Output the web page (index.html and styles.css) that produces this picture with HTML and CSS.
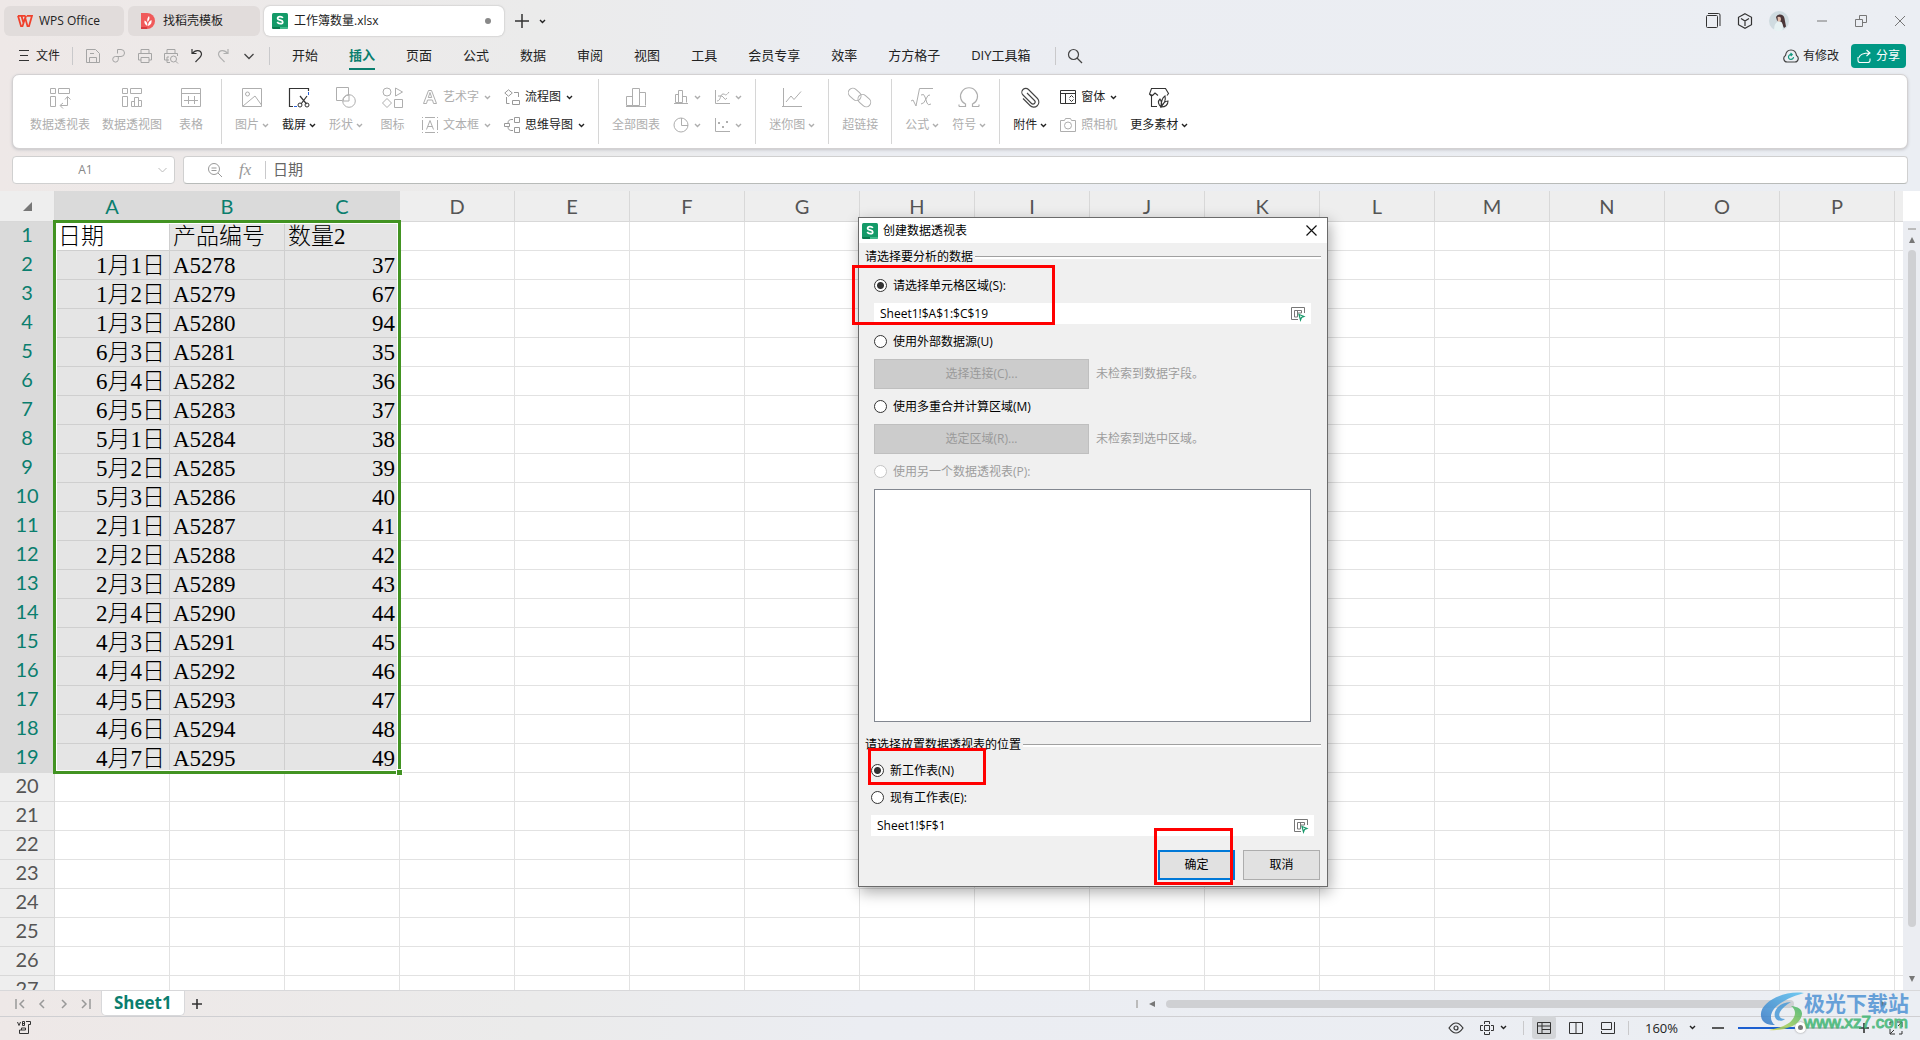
FILE: index.html
```html
<!DOCTYPE html>
<html lang="zh-CN">
<head>
<meta charset="utf-8">
<title>工作簿数量.xlsx - WPS Office</title>
<link rel="stylesheet" href="styles.css">
</head>
<body>
<svg class="defs" aria-hidden="true">
  <symbol id="chev" viewBox="0 0 7 5"><path d="M1 1l2.500 2.500L6 1" fill="none" stroke="currentColor" stroke-width="1.400"/></symbol>
  <symbol id="sheet-logo" viewBox="0 0 16 16"><rect width="16" height="16" rx="1.500" fill="#149a68"/><path d="M0 14h8v2H1.500Q0 16 0 14z" fill="#0a7a4e"/><path d="M8 14h8q0 2-1.500 2H8z" fill="#3fb98a"/><path d="M10.800 5C10 3 5.600 3 5.600 5.300c0 2.400 5.200 1.400 5.200 3.600 0 2.300-4.600 2.300-5.500 0" fill="none" stroke="#fff" stroke-width="1.700"/></symbol>
  <symbol id="pick" viewBox="0 0 16 16"><path d="M8 13.500H1.500v-12h13V7M4.500 4.500h7v2.500h-4v4h-3zM7.500 4.500V7" fill="none" stroke="#777"/><path d="M9 8.500l5 2-2.500 1-1 2.500z" fill="none" stroke="#1a9a6c" stroke-width="1.200"/></symbol>
</svg>
<div class="app">
  <header class="titlebar">
    <button class="tab tab-home"><svg width="16" height="14" viewBox="0 0 16 14"><path d="M1 1.800h7M1 1.800l3 10.400h1.500l2.700-8.400 2.300 8.400H12l3-10.400h-5M4.500 2l2 7M8 5l1.200-3.200" fill="none" stroke="#f0412c" stroke-width="1.800"/></svg><span>WPS Office</span></button>
    <button class="tab tab-doc"><svg width="14" height="16" viewBox="0 0 14 16"><path d="M0 0h6a8 8 0 010 16H0z" fill="#f05a5a"/><path d="M0 14h6v2H0z" fill="#d83a3f"/><path d="M6.500 13C4 12 3 10 3.500 7.500c2 .5 3 2.500 3 5.500zM6.500 9C5.800 6.500 6.500 4.500 8 3c1 2 .5 4-1.500 6zM7 13c0-3 1-5 3.500-6 .5 3-.5 5-3.500 6z" fill="#fff"/></svg><span>找稻壳模板</span></button>
    <button class="tab tab-active"><svg width="16" height="16"><use href="#sheet-logo"/></svg><span>工作簿数量.xlsx</span><i class="dot"></i></button>
    <button class="plain" aria-label="新建"><svg width="14" height="14" viewBox="0 0 14 14"><path d="M7 0v14M0 7h14" stroke="#333" stroke-width="1.500"/></svg></button>
    <button class="plain" aria-label="标签列表"><svg width="7" height="5"><use href="#chev"/></svg></button>
    <div class="window-tools">
      <button class="plain" aria-label="窗口"><svg width="16" height="16" viewBox="0 0 16 16"><path d="M3 .5h10.500q1.500 0 1.500 1.500V13" fill="none" stroke="#333"/><rect x="1.500" y="2.500" width="11" height="12" rx="1" fill="none" stroke="#333"/></svg></button>
      <button class="plain" aria-label="应用"><svg width="16" height="16" viewBox="0 0 16 16"><path d="M8 .8l6.500 3.500v7.400L8 15.200 1.500 11.700V4.300zM4 5.500l4 2.500 4-2.500M8 8v5" fill="none" stroke="#333" stroke-width="1.200"/></svg></button>
      <button class="plain" aria-label="账号"><svg width="20" height="20" viewBox="0 0 20 20"><circle cx="10" cy="10" r="10" fill="#cfdbe0"/><path d="M7 6c2-4 8-3 8.500 1.500l1.500 8-2 1.500-3-6-4-1.500z" fill="#4a3638"/><path d="M8.500 6q3.500-1 3.500 2t-3 3z" fill="#e2bfae"/><path d="M5 19q0-8 5-8.500t3.500 9q-4.500 1.500-8.500-.5z" fill="#e7f2f3"/></svg></button>
      <button class="plain" aria-label="最小化"><svg width="10" height="10" viewBox="0 0 10 10"><path d="M0 5h10" stroke="#777"/></svg></button>
      <button class="plain" aria-label="还原"><svg width="12" height="12" viewBox="0 0 12 12"><path d="M.5 4.500h7v7h-7zM4.500 4.500v-4h7v7h-4" fill="none" stroke="#777"/></svg></button>
      <button class="plain" aria-label="关闭"><svg width="10" height="10" viewBox="0 0 10 10"><path d="M0 0l10 10M10 0L0 10" stroke="#777"/></svg></button>
    </div>
  </header>

  <nav class="menubar">
    <button class="file"><svg width="10" height="11" viewBox="0 0 10 11"><path d="M0 .5h10M1 5.500h8M0 10.500h10" stroke="#333"/></svg><span>文件</span></button>
    <i class="rule"></i>
    <div class="quick">
      <button class="plain" aria-label="保存"><svg width="16" height="16" viewBox="0 0 16 16"><path d="M1.500 1.500h9l4 4v9h-13zM4.500 14V9.500h7V14M5 5.500h4" fill="none" stroke="#a5a5a5"/></svg></button>
      <button class="plain" aria-label="输出"><svg width="16" height="16" viewBox="0 0 16 16"><path d="M6.500 5.500V1.500H10a3.500 3.500 0 010 7H4.500a2.800 2.800 0 102.800 3V8" fill="none" stroke="#a5a5a5"/></svg></button>
      <button class="plain" aria-label="打印"><svg width="16" height="16" viewBox="0 0 16 16"><path d="M4 5V1.500h8V5M4 12H1.500V5.500h13V12H12M4 9.500h8v5H4z" fill="none" stroke="#a5a5a5"/></svg></button>
      <button class="plain" aria-label="打印预览"><svg width="16" height="16" viewBox="0 0 16 16"><path d="M4 5V1.500h8V5M6 12H1.500V5.500h13V8M6 9H4v5.500h3" fill="none" stroke="#a5a5a5"/><circle cx="10.500" cy="11" r="3" fill="none" stroke="#a5a5a5"/><path d="M12.700 13.200L15 15.500" stroke="#a5a5a5"/></svg></button>
      <button class="plain" aria-label="撤销"><svg width="16" height="16" viewBox="0 0 16 16"><path d="M3 1v4.500h4.500M3.500 5.500C6 1.500 12 1.500 12.500 6 12.500 9 9 11 6.500 14" fill="none" stroke="#333" stroke-width="1.200"/></svg></button>
      <button class="plain" aria-label="恢复"><svg width="16" height="16" viewBox="0 0 16 16"><path d="M13 1v4.500H8.500M12.500 5.500C10 1.500 4 1.500 3.500 6 3.500 9 7 11 9.500 14" fill="none" stroke="#b0b0b0" stroke-width="1.200"/></svg></button>
      <button class="plain" aria-label="更多"><svg width="16" height="16" viewBox="0 0 16 16"><path d="M3.500 6L8 10.500 12.500 6" fill="none" stroke="#444" stroke-width="1.300"/></svg></button>
    </div>
    <i class="rule"></i>
    <div class="menus">
      <button>开始</button><button class="current">插入</button><button>页面</button><button>公式</button><button>数据</button><button>审阅</button><button>视图</button><button>工具</button><button>会员专享</button><button>效率</button><button>方方格子</button><button>DIY工具箱</button>
    </div>
    <i class="rule"></i>
    <button class="plain search" aria-label="搜索"><svg width="16" height="16" viewBox="0 0 16 16"><circle cx="6.500" cy="6.500" r="5" fill="none" stroke="#444" stroke-width="1.200"/><path d="M10 10l5 5" stroke="#444" stroke-width="1.200"/></svg></button>
    <div class="menu-right">
      <button class="modified"><svg width="16" height="14" viewBox="0 0 16 14"><path d="M4 13a3.500 3.500 0 01-1.500-6.500C3 3 5 1 8 1s5 2 5.500 5.500A3.500 3.500 0 0112 13z" fill="none" stroke="#444" stroke-width="1.200"/><path d="M10.500 8A2.500 2.500 0 118.500 5.500M7.500 4l1.700 1.500L7.700 7" fill="none" stroke="#159a80" stroke-width="1.200"/></svg><span>有修改</span></button>
      <button class="share"><svg width="14" height="14" viewBox="0 0 14 14"><path d="M1 8v3.500q0 2 2 2h8q2 0 2-2V9.500M2 8.500C3 5 6 4 12.500 4M9.500 1l3.500 3-3.500 3" fill="none" stroke="#fff" stroke-width="1.100"/></svg><span>分享</span></button>
    </div>
  </nav>

  <section class="ribbon">
    <div class="group group-first">
      <button class="item off"><svg width="24" height="24" viewBox="0 0 24 24"><path d="M2.500 2.500h5v5h-5zM10.500 2.500h11v5h-11zM2.500 10.500h5v10h-5zM19.500 11v8.500h-7M17 13.500l2.500-3 3 3M15 17l-3 2.500 3 3" fill="none" stroke="currentColor"/></svg><span>数据透视表</span></button>
      <button class="item off"><svg width="24" height="24" viewBox="0 0 24 24"><path d="M2.500 2.500h5v5h-5zM10.500 2.500h11v5h-11zM2.500 10.500h5v10h-5zM11.500 15.500h3v5h-3zM14.500 11.500h4v9h-4zM18.500 14.500h3v6h-3z" fill="none" stroke="currentColor"/></svg><span>数据透视图</span></button>
      <button class="item off"><svg width="24" height="24" viewBox="0 0 24 24"><path d="M2.500 2.500h19v18h-19zM2.500 7.500h19M5 14.500h14M9.500 10v8M15.500 10v8" fill="none" stroke="currentColor"/></svg><span>表格</span></button>
    </div>
    <div class="group">
      <button class="item off"><svg width="24" height="24" viewBox="0 0 24 24"><path d="M2.500 2.500h19v18h-19zM3 20l12-10 6.500 9" fill="none" stroke="currentColor"/><circle cx="7.500" cy="8" r="2" fill="none" stroke="currentColor"/></svg><span>图片<svg class="chev"><use href="#chev"/></svg></span></button>
      <button class="item"><svg width="24" height="24" viewBox="0 0 24 24"><path d="M6 20.500H2.500v-18h19V5M13 10l6.500 8M20 10l-6 8" fill="none" stroke="#333" stroke-width="1.200"/><circle cx="13" cy="19" r="2" fill="none" stroke="#333"/><circle cx="20" cy="19" r="2" fill="none" stroke="#333"/><path d="M21.500 6v3M7 20.500h3" stroke="#2a62d8"/></svg><span>截屏<svg class="chev"><use href="#chev"/></svg></span></button>
      <button class="item off"><svg width="24" height="24" viewBox="0 0 24 24"><path d="M8 14.500H2.500v-13h12V9" fill="none" stroke="currentColor"/><circle cx="15" cy="15" r="6.300" fill="none" stroke="currentColor"/><path d="M9 15a6 6 0 016-6v6z" fill="none" stroke="currentColor"/></svg><span>形状<svg class="chev"><use href="#chev"/></svg></span></button>
      <button class="item off"><svg width="24" height="24" viewBox="0 0 24 24"><circle cx="6" cy="6" r="4" fill="none" stroke="currentColor"/><path d="M14.500 2l7 4-7 4zM6 12.500l4.500 4.500L6 21.500 1.500 17zM13.500 13.500h8v8h-8z" fill="none" stroke="currentColor"/></svg><span>图标</span></button>
      <div class="stack">
        <button class="mini off"><svg width="16" height="16" viewBox="0 0 16 16"><path d="M1.500 14.500L6.500 1.500h3l5 13h-3l-1-3.500h-5l-1 3.500zM6.300 8.500h3.400L8 3.500z" fill="none" stroke="currentColor"/></svg><span>艺术字</span><svg class="chev"><use href="#chev"/></svg></button>
        <button class="mini off"><svg width="16" height="16" viewBox="0 0 16 16"><path d="M.5 3v10M15.500 3v10M3 .5h10M3 15.500h10M4.500 12.500L8 3.500l3.500 9M5.700 9.500h4.600" fill="none" stroke="currentColor"/><path d="M0 0h1v1H0zM15 0h1v1h-1zM0 15h1v1H0zM15 15h1v1h-1z" fill="currentColor"/></svg><span>文本框</span><svg class="chev"><use href="#chev"/></svg></button>
      </div>
      <div class="stack">
        <button class="mini"><svg width="16" height="16" viewBox="0 0 16 16"><path d="M4.500.8L8.300 4 4.500 7.200.8 4zM10 3.500h4.500V8M2.500 8v6.500h3M8.500 11.500h7v4h-7z" fill="none" stroke="#999"/></svg><span>流程图</span><svg class="chev"><use href="#chev"/></svg></button>
        <button class="mini"><svg width="16" height="16" viewBox="0 0 16 16"><path d="M10.500.5h5v5h-5zM10.500 10.500h5v5h-5zM.5 6.500h5v3h-5zM9 2.500Q4 2 4 6M9 13.500Q4 14 4 10" fill="none" stroke="#999"/></svg><span>思维导图</span><svg class="chev"><use href="#chev"/></svg></button>
      </div>
    </div>
    <div class="group">
      <button class="item off"><svg width="24" height="24" viewBox="0 0 24 24"><path d="M2.500 10.500h6v9h-6zM8.500 2.500h7v17h-7zM15.500 6.500h6v13M2 20.500h20" fill="none" stroke="currentColor"/></svg><span>全部图表</span></button>
      <div class="stack">
        <button class="mini off" aria-label="柱形图"><svg width="16" height="16" viewBox="0 0 16 16"><path d="M2.500 5.500h3v8h-3zM5.500 1.500h4v12h-4zM9.500 7.500h4v6M1 14.500h14" fill="none" stroke="currentColor"/></svg><svg class="chev"><use href="#chev"/></svg></button>
        <button class="mini off" aria-label="饼图"><svg width="16" height="16" viewBox="0 0 16 16"><circle cx="8" cy="8" r="7" fill="none" stroke="currentColor"/><path d="M8.500 1v7.500H15" fill="none" stroke="currentColor"/></svg><svg class="chev"><use href="#chev"/></svg></button>
      </div>
      <div class="stack">
        <button class="mini off" aria-label="折线图"><svg width="16" height="16" viewBox="0 0 16 16"><path d="M1.500 1v13.500H16M3 12c4 0 3-7 6-7s2 3 6-2M4 7q5-1 6 2t3 0" fill="none" stroke="currentColor"/></svg><svg class="chev"><use href="#chev"/></svg></button>
        <button class="mini off" aria-label="散点图"><svg width="16" height="16" viewBox="0 0 16 16"><path d="M1.500 1v13.500H16" fill="none" stroke="currentColor"/><path d="M4 5h2v2H4zM8 9h2v2H8zM12 4h2v2h-2z" fill="currentColor"/></svg><svg class="chev"><use href="#chev"/></svg></button>
      </div>
    </div>
    <div class="group">
      <button class="item off"><svg width="24" height="24" viewBox="0 0 24 24"><path d="M3.500 2v18.500M2 20.500h20M6 16l5-6 3 3.500 7-8" fill="none" stroke="currentColor"/></svg><span>迷你图<svg class="chev"><use href="#chev"/></svg></span></button>
    </div>
    <div class="group">
      <button class="item off"><svg width="24" height="24" viewBox="0 0 24 24"><g fill="none" stroke="currentColor"><rect x="0" y="4" width="14" height="9" rx="4.500" transform="rotate(42 7 8)"/><rect x="9" y="10" width="14" height="9" rx="4.500" transform="rotate(42 16 15)"/></g></svg><span>超链接</span></button>
    </div>
    <div class="group">
      <button class="item off"><svg width="24" height="24" viewBox="0 0 24 24"><path d="M1 15l2-1 3 6L9.500 2.500H23M11 9q3-2 4 2l2 6q1 3 4 1M20 9q-2-1-4 4t-5 5" fill="none" stroke="currentColor"/></svg><span>公式<svg class="chev"><use href="#chev"/></svg></span></button>
      <button class="item off"><svg width="24" height="24" viewBox="0 0 24 24"><path d="M2 20.500h6.500V18A8.500 8.500 0 1115.500 18v2.500H22M2 18.500v2M22 18.500v2" fill="none" stroke="currentColor" stroke-width="1.200"/></svg><span>符号<svg class="chev"><use href="#chev"/></svg></span></button>
    </div>
    <div class="group">
      <button class="item"><svg width="24" height="24" viewBox="0 0 24 24"><path d="M9 7l7.500 7.500a2 2 0 01-3 3L5 9a3.800 3.800 0 015.500-5.500l9 9a5 5 0 01-7.500 7L5 12.500" fill="none" stroke="#444" stroke-width="1.100"/></svg><span>附件<svg class="chev"><use href="#chev"/></svg></span></button>
      <div class="stack">
        <button class="mini"><svg width="16" height="16" viewBox="0 0 16 16"><path d="M.5 1.500h15v13H.5zM.5 4.500h15M5.500 4.500v10M9.500 8.500l2-2 2 2M9.500 10.500l2 2 2-2" fill="none" stroke="#333"/></svg><span>窗体</span><svg class="chev"><use href="#chev"/></svg></button>
        <button class="mini off"><svg width="16" height="16" viewBox="0 0 16 16"><path d="M.5 3.500h4l1-2h5l1 2h4v11H.5z" fill="none" stroke="currentColor"/><circle cx="8" cy="8.500" r="3.500" fill="none" stroke="currentColor"/></svg><span>照相机</span></button>
      </div>
      <button class="item"><svg width="24" height="24" viewBox="0 0 24 24"><path d="M10 20.500H4.500V10L2.500 8l2-5.500h14l3 5-1.500 2M2.500 8l3 1.500L8 7l3 2.500M14 21c-3-3-3-6-1-8 2 3 2 5 1 8zc0-5 1-9 4-11 1 4-1 8-4 11zc2-4 4-6 7-6 0 4-3 6-7 6z" fill="none" stroke="#333" stroke-width="1.100"/></svg><span>更多素材<svg class="chev"><use href="#chev"/></svg></span></button>
    </div>
  </section>

  <section class="formula-row">
    <div class="name-box"><input type="text" value="A1" aria-label="名称框"><svg width="9" height="6" viewBox="0 0 9 6"><path d="M.5 1l4 4 4-4" fill="none" stroke="#bbb"/></svg></div>
    <div class="formula-box">
      <svg width="16" height="16" viewBox="0 0 16 16"><circle cx="7" cy="7" r="5.500" fill="none" stroke="#999"/><path d="M4.500 6h5M4.500 8.500h5M11 11l4 4" stroke="#999"/></svg>
      <em class="fx">fx</em>
      <i class="rule"></i>
      <input type="text" value="日期" aria-label="编辑栏">
    </div>
  </section>

  <main class="sheet">
    <div class="grid-area">
      <table class="grid" id="grid"></table>
      <div class="selection"><i></i></div>
    </div>
    <div class="vscroll">
      <i class="split"></i>
      <svg width="6" height="6" viewBox="0 0 6 6"><path d="M3 0l3 6H0z" fill="#777"/></svg>
      <i class="thumb"></i>
      <svg width="6" height="6" viewBox="0 0 6 6"><path d="M3 6L0 0h6z" fill="#777"/></svg>
    </div>
  </main>

  <div class="sheetbar">
    <div class="sheet-nav">
      <button class="plain" aria-label="首个"><svg width="10" height="10" viewBox="0 0 10 10"><path d="M1 0v10M9 1L5 5l4 4" fill="none" stroke="#999" stroke-width="1.500"/></svg></button>
      <button class="plain" aria-label="上一个"><svg width="10" height="10" viewBox="0 0 10 10"><path d="M7 1L3 5l4 4" fill="none" stroke="#999" stroke-width="1.500"/></svg></button>
      <button class="plain" aria-label="下一个"><svg width="10" height="10" viewBox="0 0 10 10"><path d="M3 1l4 4-4 4" fill="none" stroke="#999" stroke-width="1.500"/></svg></button>
      <button class="plain" aria-label="末个"><svg width="10" height="10" viewBox="0 0 10 10"><path d="M9 0v10M1 1l4 4-4 4" fill="none" stroke="#999" stroke-width="1.500"/></svg></button>
    </div>
    <button class="sheet-tab">Sheet1</button>
    <button class="plain" aria-label="新建工作表"><svg width="10" height="10" viewBox="0 0 10 10"><path d="M5 0v10M0 5h10" stroke="#333" stroke-width="1.600"/></svg></button>
    <div class="hscroll">
      <i class="split"></i>
      <svg width="6" height="6" viewBox="0 0 6 6"><path d="M0 3l6-3v6z" fill="#777"/></svg>
      <i class="thumb"></i>
      <svg width="6" height="6" viewBox="0 0 6 6"><path d="M6 3L0 0v6z" fill="#777"/></svg>
    </div>
  </div>

  <footer class="statusbar">
    <svg width="16" height="14" viewBox="0 0 16 14"><path d="M.5 1L2 4.500 3.500 1M5.500.5h2v4h-2zM5.500 2.500h2M9 .5h4.500v3h-2v9H2.500V9h6V7h-4v2" fill="none" stroke="#333"/></svg>
    <div class="status-right">
      <svg width="16" height="12" viewBox="0 0 16 12"><path d="M1 6q7-10 14 0-7 10-14 0z" fill="none" stroke="#333" stroke-width="1.200"/><circle cx="8" cy="6" r="2" fill="none" stroke="#333" stroke-width="1.200"/></svg>
      <button class="plain cross" aria-label="阅读模式"><svg width="14" height="14" viewBox="0 0 14 14"><path d="M4.500 4.500h5v5h-5zM4.500 3V.5h5V3M4.500 11v2.500h5V11M3 4.500H.5v5H3M11 4.500h2.500v5H11" fill="none" stroke="#333"/></svg><svg class="chev"><use href="#chev"/></svg></button>
      <i class="rule"></i>
      <div class="views">
        <button class="plain on" aria-label="普通视图"><svg width="14" height="12" viewBox="0 0 14 12"><path d="M.5.5h13v11H.5zM.5 4h13M5 .5v11M5 7.500h8.500" fill="none" stroke="#333"/></svg></button>
        <button class="plain" aria-label="分页预览"><svg width="14" height="12" viewBox="0 0 14 12"><path d="M.5.5h13v11H.5zM7 .5v11" fill="none" stroke="#333"/></svg></button>
        <button class="plain" aria-label="页面布局"><svg width="14" height="12" viewBox="0 0 14 12"><path d="M.5.500h10v7H.5zM13.500 0v11.500H.5V9" fill="none" stroke="#333"/></svg></button>
      </div>
      <i class="rule"></i>
      <button class="zoom"><span>160%</span><svg class="chev"><use href="#chev"/></svg></button>
      <button class="plain" aria-label="缩小"><svg width="12" height="12" viewBox="0 0 12 12"><path d="M0 6h12" stroke="#333" stroke-width="1.600"/></svg></button>
      <input class="zoom-range" type="range" min="10" max="190" value="117" aria-label="显示比例">
      <button class="plain" aria-label="放大"><svg width="10" height="10" viewBox="0 0 10 10"><path d="M5 0v10M0 5h10" stroke="#333" stroke-width="1.600"/></svg></button>
      <button class="plain full" aria-label="全屏"><svg width="14" height="14" viewBox="0 0 14 14"><path d="M8 1h5v5M13 1L9 5M6 13H1V8M1 13l4-4M1 4V1h3M10 13h3v-3" fill="none" stroke="#333"/></svg></button>
    </div>
  </footer>
</div>

<div class="dialog" role="dialog" aria-labelledby="dlg-title">
  <div class="dialog-title"><svg width="16" height="16"><use href="#sheet-logo"/></svg><span id="dlg-title">创建数据透视表</span><button class="plain" aria-label="关闭"><svg width="11" height="11" viewBox="0 0 11 11"><path d="M.5.5l10 10M10.500.5l-10 10" stroke="#111" stroke-width="1.200"/></svg></button></div>
  <div class="section-title"><span>请选择要分析的数据</span></div>
  <div class="fields source">
    <label class="radio"><input type="radio" name="source" checked><span>请选择单元格区域(S):</span></label>
    <div class="range"><input type="text" value="Sheet1!$A$1:$C$19" aria-label="单元格区域"><button class="plain" aria-label="选取"><svg width="16" height="16"><use href="#pick"/></svg></button></div>
    <label class="radio"><input type="radio" name="source"><span>使用外部数据源(U)</span></label>
    <div class="choose"><button disabled>选择连接(C)...</button><span>未检索到数据字段。</span></div>
    <label class="radio"><input type="radio" name="source"><span>使用多重合并计算区域(M)</span></label>
    <div class="choose"><button disabled>选定区域(R)...</button><span>未检索到选中区域。</span></div>
    <label class="radio off-label"><input type="radio" name="source" disabled><span>使用另一个数据透视表(P):</span></label>
    <div class="list"></div>
  </div>
  <div class="section-title second"><span>请选择放置数据透视表的位置</span></div>
  <div class="fields target">
    <label class="radio"><input type="radio" name="target" checked><span>新工作表(N)</span></label>
    <label class="radio"><input type="radio" name="target"><span>现有工作表(E):</span></label>
    <div class="range"><input type="text" value="Sheet1!$F$1" aria-label="目标位置"><button class="plain" aria-label="选取"><svg width="16" height="16"><use href="#pick"/></svg></button></div>
  </div>
  <div class="actions"><button class="ok">确定</button><button>取消</button></div>
  <i class="mark mark-source"></i>
  <i class="mark mark-target"></i>
  <i class="mark mark-ok"></i>
</div>

<div class="watermark">
  <svg width="44" height="40" viewBox="0 0 44 40"><defs><linearGradient id="wb" x1="0" y1="1" x2="1" y2="0"><stop offset="0" stop-color="#3576c4"/><stop offset="1" stop-color="#5cc4f2"/></linearGradient><linearGradient id="wg" x1="0" y1="1" x2="1" y2="0"><stop offset="0" stop-color="#d8dc50"/><stop offset="1" stop-color="#3db36b"/></linearGradient></defs><path d="M44 1C24-2-1 10 1 24c1 8 8 9 14 9C8 28 6 12 44 1z" fill="url(#wb)"/><path d="M31 10c-12 0-18 9-16 15 1 4 7 5 10 2-5 0-7-3-5-7s6-7 11-10z" fill="#4a9ad8"/><path d="M31 14c11 1 14 7 8 15-6 7-19 10-30 9 12-2 22-6 25-13 2-4 1-8-3-11z" fill="url(#wg)"/></svg>
  <div class="watermark-text"><strong>极光下载站</strong><span>www.xz7.com</span></div>
</div>
<script src="app.js"></script>
</body>
</html>
```

FILE: styles.css
```css
* { box-sizing: border-box; }
html, body { height: 100%; }
body {
  margin: 0;
  overflow: hidden;
  font: 12px/18px "Open Sans", "Noto Sans CJK SC", sans-serif;
  color: #222;
}
button, input { font: inherit; color: inherit; }
button { display: flex; align-items: center; padding: 0; border: 0; background: none; white-space: nowrap; }
input[type="text"] { border: 0; padding: 0; background: none; outline: 0; min-width: 0; }
svg { flex: none; display: block; }
.defs { position: absolute; width: 0; height: 0; }
.chev { width: 7px; height: 5px; }
.rule { flex: none; width: 1px; height: 18px; background: #c9c9cb; }

.app {
  display: flex;
  flex-direction: column;
  height: 100vh;
  background: linear-gradient(90deg, #eee8e7 0, #ebebeb 28%, #ebedf2 45%, #ebeef3 100%);
}

/* title bar */
.titlebar { display: flex; align-items: center; gap: 4px; height: 37px; padding: 5px 15px 0 4px; }
.tab { height: 30px; padding: 0 13px; gap: 6px; border-radius: 6px; background: #e1dcdb; }
.tab-home { width: 120px; }
.tab-doc { width: 132px; gap: 8px; }
.tab-active { width: 240px; padding: 0 8px; background: #fff; box-shadow: 0 0 2px #aaa; }
.tab + .plain { margin-left: 7px; }
.titlebar > .plain + .plain { margin-left: 6px; }
.dot { width: 6px; height: 6px; margin: 0 5px 0 auto; border-radius: 3px; background: #888; }
.window-tools { display: flex; align-items: center; margin-left: auto; gap: 16px; }
.window-tools .plain:nth-child(n+4) { margin-left: 12px; }

/* menu bar */
.menubar { display: flex; align-items: center; height: 37px; padding: 0 14px 0 19px; }
.file { gap: 7px; margin-right: 12px; }
.quick { display: flex; gap: 10px; padding: 0 12px; }
.menus { display: flex; gap: 31px; padding: 0 24px 0 22px; font-size: 13px; }
.menus button { height: 28px; line-height: 24px; border: solid transparent; border-width: 0 0 2px; }
.menus .current { color: #0a7e6e; font-weight: 700; border-bottom-color: #0a7e6e; }
.search { margin-left: 11px; }
.menu-right { display: flex; gap: 12px; margin-left: auto; }
.modified { gap: 4px; }
.share { height: 24px; padding: 0 6px; gap: 5px; border-radius: 4px; background: #009884; color: #fff; }

/* ribbon */
.ribbon {
  display: flex;
  height: 75px;
  margin: 0 12px;
  padding: 4px 0;
  border: 1px solid #d3d1d2;
  border-radius: 7px;
  background: #fff;
  box-shadow: 0 1px 3px #c4c4c8;
}
.group { display: flex; gap: 13px; padding: 7px 13px 0; border-right: 1px solid #d6d6d6; }
.group:last-child { border-right: 0; }
.group-first { gap: 12px; padding-left: 17px; }
.item { flex-direction: column; align-self: flex-start; gap: 6px; min-width: 33px; line-height: 18px; }
.group-first .item { min-width: 34px; }
.item span { display: flex; align-items: center; gap: 3px; }
.off { color: #aeaeae; }
.stack { display: flex; flex-direction: column; gap: 10px; padding-top: 2px; }
.mini { gap: 5px; height: 18px; }

/* formula row */
.formula-row { display: flex; gap: 8px; margin: 7px 12px; height: 28px; }
.name-box, .formula-box { display: flex; align-items: center; border: 1px solid #d0d0d0; border-radius: 4px; background: #fff; }
.name-box { width: 163px; padding-right: 7px; color: #888; }
.name-box input { flex: 1; text-align: center; }
.formula-box { flex: 1; padding-left: 23px; border-bottom-color: #b8bbb9; color: #666; }
.formula-box input { flex: 1; padding: 0 0 3px 7px; font-size: 15px; }
.fx { width: 20px; margin: 0 6px 0 16px; font: italic 17px/18px "Liberation Serif", serif; color: #999; }

/* sheet */
.sheet { display: flex; flex: 1; min-height: 0; background: #fff; }
.grid-area { position: relative; flex: 1; min-width: 0; overflow: hidden; }
.grid { width: 100%; table-layout: fixed; border-collapse: separate; border-spacing: 0; }
.grid th, .grid td { height: 29px; padding: 0; border: solid #e2e2e2; border-width: 0 1px 1px 0; white-space: nowrap; }
.grid th { background: #eee; border-color: #d8d8d8; color: #555; font: 20px/28px Lato, "Open Sans", sans-serif; }
.grid thead th { height: 31px; }
.grid tbody th { padding-bottom: 3px; line-height: 25px; }
.grid th.sel { background: #dadada; border-color: #dadada; color: #0a7e6e; }
.grid th:last-child, .grid td:last-child { border-right: 0; }
.grid td { padding: 2px 4px 0; font: 300 23px/26px "Liberation Serif", "Noto Sans CJK SC", serif; color: #000; }
.grid td.in { background: #e5e5e5; border-color: #cfcfcf; }
.grid td.active { background: #fff; }
.grid td.text { padding: 2px 3px 0; text-align: left; }
.grid td.num { text-align: right; }
.grid .w-head { width: 55px; }
.grid .w-col { width: 115px; }
.corner svg { margin: 0 auto; }
/* the frame lies over the range A1:C19 */
.selection { position: absolute; left: 53px; top: 29px; width: 348px; height: 554px; border: 3px solid #429322; box-shadow: inset 0 0 0 1px #fff; }
.selection i { position: absolute; right: -5px; bottom: -5px; width: 7px; height: 7px; border: 1px solid #fff; background: #429322; }
.vscroll { display: flex; flex-direction: column; align-items: center; gap: 7px; width: 17px; margin-top: 30px; padding: 7px 0 8px; background: #ebedf2; }
.vscroll .split { width: 8px; height: 2px; background: #bbb; }
.vscroll .thumb { flex: 1; width: 8px; margin-bottom: 42px; border-radius: 4px; background: #cfd0d3; }

/* sheet tabs */
.sheetbar { display: flex; align-items: center; gap: 7px; height: 26px; padding: 0 33px 0 15px; border-top: 1px solid #d8d8da; }
.sheet-nav { display: flex; gap: 12px; width: 79px; }
.sheet-tab { align-self: flex-start; height: 25px; padding: 0 12px; border: solid #d8d8da; border-width: 0 1px 1px; border-radius: 0 0 5px 5px; background: #fff; color: #0a7e6e; font-size: 17px; font-weight: 700; }
.hscroll { display: flex; align-items: center; gap: 11px; width: 751px; margin-left: auto; }
.hscroll .split { width: 2px; height: 8px; background: #bbb; }
.hscroll .thumb { flex: 1; height: 8px; margin-right: 76px; border-radius: 4px; background: #cfd0d3; }

/* status bar */
.statusbar { display: flex; align-items: center; height: 24px; padding: 0 17px 2px; border-top: 1px solid #cfcfd2; }
.status-right { display: flex; align-items: center; gap: 16px; margin-left: auto; }
.cross { gap: 6px; }
.status-right .rule { height: 14px; }
.views { display: flex; gap: 8px; margin: 0 -8px; }
.views .plain { justify-content: center; width: 24px; height: 23px; border-radius: 3px; }
.views .on { background: #d3d5d8; }
.zoom { gap: 11px; }
.zoom span { min-width: 33px; font-size: 13px; }
.zoom-range { appearance: none; width: 107px; height: 12px; margin: 0 -2px; background: linear-gradient(90deg, #1c5fd0 58%, #bcc0c4 58%) center / 100% 2px no-repeat; }
.zoom-range::-webkit-slider-thumb { appearance: none; width: 11px; height: 11px; border: 3px solid #fff; border-radius: 6px; background: #777; box-shadow: 0 0 2px #888; }
.full { margin-left: 4px; }

/* dialog */
.dialog { position: absolute; left: 858px; top: 217px; width: 470px; border: 1px solid #6b6b6b; background: #f0f0f0; color: #000; box-shadow: 2px 5px 14px #00000055; padding-bottom: 6px; }
.dialog-title { display: flex; align-items: center; gap: 5px; height: 25px; padding: 0 10px 0 3px; background: #fff; }
.dialog-title .plain { margin-left: auto; }
.section-title { display: flex; align-items: center; gap: 2px; margin: 5px 6px 10px; }
.section-title::after { content: ""; flex: 1; height: 2px; border-top: 1px solid #a0a0a0; background: #fff; }
.section-title.second { margin: 14px 6px 7px; }
.fields { display: flex; flex-direction: column; gap: 8px; }
.source { padding: 0 16px 0 15px; }
.target { padding: 0 13px 0 12px; }
.radio { display: flex; align-items: center; gap: 6px; height: 19px; }
.radio input { appearance: none; width: 13px; height: 13px; margin: 0; border: 1px solid #333; border-radius: 7px; background: #fff; }
.radio input:checked { background: radial-gradient(circle, #333 3px, #fff 4px); }
.off-label { color: #9d9d9d; }
.off-label input { border-color: #c4c4c4; }
.range { display: flex; align-items: center; height: 21px; padding: 0 5px 0 6px; background: #fff; }
.range input { flex: 1; }
.choose { display: flex; align-items: center; gap: 7px; color: #9d9d9d; }
.choose button { justify-content: center; width: 215px; height: 30px; border: 1px solid #bfbfbf; background: #ccc; color: #9a9a9a; }
.list { height: 233px; border: 1px solid #828790; background: #fff; }
.actions { display: flex; justify-content: flex-end; gap: 8px; margin: 14px 7px 0; }
.actions button { justify-content: center; width: 77px; height: 30px; border: 1px solid #adadad; background: #e1e1e1; }
.actions .ok { border: 2px solid #0078d7; }
.mark { position: absolute; border: 3px solid #f00; }
.mark-source { left: -7px; top: 47px; width: 203px; height: 60px; }
.mark-target { left: 9px; top: 530px; width: 118px; height: 37px; }
.mark-ok { left: 295px; top: 610px; width: 79px; height: 57px; }

/* watermark */
.watermark { position: absolute; right: 11px; bottom: 8px; display: flex; opacity: .85; pointer-events: none; }
.watermark-text { display: flex; flex-direction: column; }
.watermark strong { font-size: 21px; line-height: 22px; color: #4f93d4; }
.watermark span { font: 500 17px/18px "Liberation Sans", sans-serif; color: #3fb573; -webkit-text-stroke: 1px #3fb573; }
```

FILE: app.js
```js
const columns = 'ABCDEFGHIJKLMNOP'.split('');
const data = [
  ['日期', '产品编号', '数量2'],
  ['1月1日', 'A5278', 37], ['1月2日', 'A5279', 67], ['1月3日', 'A5280', 94],
  ['6月3日', 'A5281', 35], ['6月4日', 'A5282', 36], ['6月5日', 'A5283', 37],
  ['5月1日', 'A5284', 38], ['5月2日', 'A5285', 39], ['5月3日', 'A5286', 40],
  ['2月1日', 'A5287', 41], ['2月2日', 'A5288', 42], ['2月3日', 'A5289', 43],
  ['2月4日', 'A5290', 44], ['4月3日', 'A5291', 45], ['4月4日', 'A5292', 46],
  ['4月5日', 'A5293', 47], ['4月6日', 'A5294', 48], ['4月7日', 'A5295', 49]
];
const rowCount = 27;

let html = '<colgroup><col class="w-head">' + columns.map(() => '<col class="w-col">').join('') + '<col></colgroup>';
html += '<thead><tr><th class="corner"><svg width="9" height="9" viewBox="0 0 9 9"><path d="M9 0v9H0z" fill="#777"/></svg></th>';
html += columns.map((c, i) => `<th class="${i < 3 ? 'sel' : ''}">${c}</th>`).join('') + '<th></th></tr></thead><tbody>';
for (let r = 0; r < rowCount; r++) {
  const row = data[r];
  html += `<tr><th class="${row ? 'sel' : ''}">${r + 1}</th>`;
  for (let c = 0; c <= columns.length; c++) {
    if (row && c < 3) {
      const kind = r === 0 || c === 1 ? 'text' : 'num';
      html += `<td class="in ${kind}${r === 0 && c === 0 ? ' active' : ''}">${row[c]}</td>`;
    } else {
      html += '<td></td>';
    }
  }
  html += '</tr>';
}
document.getElementById('grid').innerHTML = html + '</tbody>';
```
